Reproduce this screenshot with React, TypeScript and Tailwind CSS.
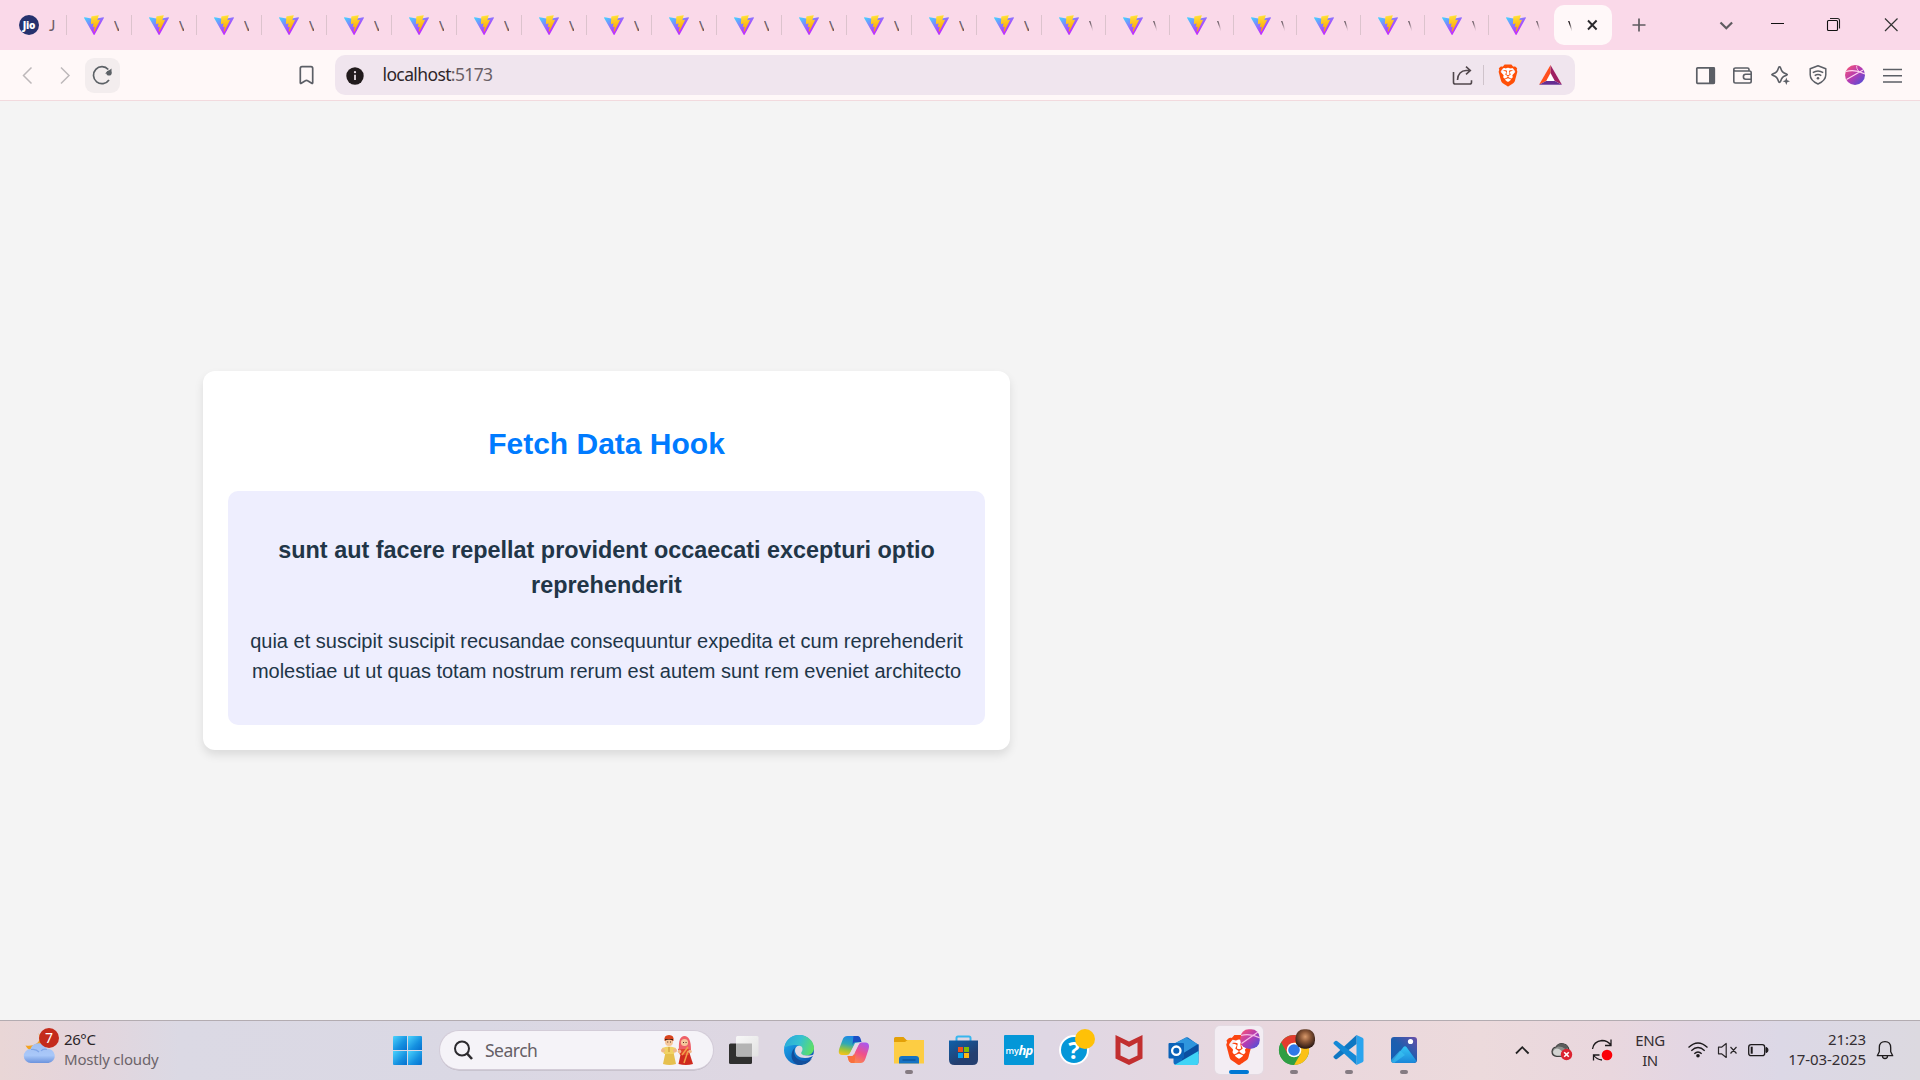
import React from "react";
import { SiBrave } from "react-icons/si";

const UI = "font-['Noto_Sans','Open_Sans',sans-serif]";

/** Icon whose drawing coordinates are given in window space. */
function Ico({
  box,
  className = "",
  children,
}: {
  box: [number, number, number, number];
  className?: string;
  children: React.ReactNode;
}) {
  return (
    <svg
      viewBox={box.join(" ")}
      width={box[2]}
      height={box[3]}
      fill="none"
      className={"block shrink-0 " + className}
    >
      {children}
    </svg>
  );
}

function Defs() {
  return (
    <svg width="0" height="0" className="absolute">
      <defs>
        <linearGradient id="viteA" x1="-.828%" x2="57.636%" y1="7.652%" y2="78.411%">
          <stop offset="0%" stopColor="#41D1FF" />
          <stop offset="100%" stopColor="#BD34FE" />
        </linearGradient>
        <linearGradient id="viteB" x1="43.376%" x2="50.316%" y1="2.242%" y2="89.03%">
          <stop offset="0%" stopColor="#FFEA83" />
          <stop offset="8.333%" stopColor="#FFDD35" />
          <stop offset="100%" stopColor="#FFA800" />
        </linearGradient>
        <linearGradient id="ball" x1="0" y1="0" x2="1" y2="1">
          <stop offset="0.1" stopColor="#f0507c" />
          <stop offset="0.5" stopColor="#b33bb4" />
          <stop offset="1" stopColor="#3f52dd" />
        </linearGradient>
        <linearGradient id="win" x1="0" y1="0" x2="1" y2="1">
          <stop offset="0" stopColor="#4bd3fd" />
          <stop offset="0.6" stopColor="#1590e0" />
          <stop offset="1" stopColor="#0670cf" />
        </linearGradient>
      </defs>
    </svg>
  );
}

function Vite() {
  return (
    <svg viewBox="0 0 256 257" width="20" height="20" className="block shrink-0">
      <path
        fill="url(#viteA)"
        d="M255.153 37.938L134.897 252.976c-2.483 4.44-8.862 4.466-11.382.048L.875 37.958c-2.746-4.814 1.371-10.646 6.827-9.67l120.385 21.517a6.537 6.537 0 0 0 2.322-.004l117.867-21.483c5.438-.991 9.574 4.796 6.877 9.62Z"
      />
      <path
        fill="url(#viteB)"
        d="M185.432.063L96.44 17.501a3.268 3.268 0 0 0-2.634 3.014l-5.474 92.456a3.268 3.268 0 0 0 3.997 3.378l24.777-5.718c2.318-.535 4.413 1.507 3.936 3.838l-7.361 36.047c-.495 2.426 1.782 4.5 4.151 3.78l15.304-4.649c2.372-.72 4.652 1.36 4.15 3.788l-11.698 56.621c-.732 3.542 3.979 5.473 5.943 2.437l1.313-2.028l72.516-144.72c1.215-2.423-.88-5.186-3.54-4.672l-25.505 4.922c-2.396.462-4.435-1.77-3.759-4.114l16.646-57.705c.677-2.35-1.37-4.583-3.769-4.113Z"
      />
    </svg>
  );
}

const TAB_WIDTHS = [...Array(15).fill(65), 64, 64, 64, 63, 64, 64, 64, 65];

function TabStrip() {
  return (
    <div className={"flex h-[50px] items-center bg-[#fad9e9] pl-[2px] text-[15px] text-[#6b5d65] " + UI}>
      <div className="flex h-[20px] w-[65px] shrink-0 items-center border-r border-[#dcc3cd] pl-[17px]">
        <div className="flex h-5 w-5 items-center justify-center rounded-full bg-[#25326e] font-['Open_Sans',sans-serif] text-[10px] leading-none font-extrabold tracking-[-0.2px] text-white">
          Jio
        </div>
        <span className="ml-[10px] font-['Lato','Open_Sans',sans-serif] text-[15px] leading-5">J</span>
      </div>
      {TAB_WIDTHS.map((w, i) => (
        <div
          key={i}
          style={{ width: w }}
          className={
            "flex h-[20px] shrink-0 items-center border-r pl-[17px] " +
            (i === TAB_WIDTHS.length - 1 ? "border-transparent" : "border-[#dcc3cd]")
          }
        >
          <Vite />
          <span
            className={
              "ml-[10px] overflow-hidden text-[15px] leading-5 " +
              (i < 15 ? "w-[5px]" : "w-[4px] [mask-image:linear-gradient(to_right,black_30%,transparent)]")
            }
          >
            V
          </span>
        </div>
      ))}
      <div className="flex h-10 w-[58px] shrink-0 items-center rounded-[10px] bg-[#fff8f9] pl-[14px] text-[#2b2326]">
        <span className="w-[4px] overflow-hidden leading-5 [mask-image:linear-gradient(to_right,black_40%,transparent)]">
          V
        </span>
        <Ico box={[1585, 15, 20, 20]} className="ml-[13px]">
          <path d="M1588 20.500l8.600 9M1596.600 20.500l-8.600 9" stroke="#2b2a2d" strokeWidth="1.900" />
        </Ico>
      </div>
      <Ico box={[1629, 15, 20, 20]} className="ml-[17px]">
        <path d="M1639 18.500v13M1632.500 25h13" stroke="#5f5b60" strokeWidth="1.700" />
      </Ico>
      <Ico box={[1716, 15, 20, 20]} className="ml-[67px]">
        <path d="M1720.500 22.500l5.800 5.800l5.800-5.800" stroke="#5f5b60" strokeWidth="2.200" />
      </Ico>
      <Ico box={[1767, 15, 20, 20]} className="ml-[31px]">
        <path d="M1771 23.500h13" stroke="#111" strokeWidth="1" />
      </Ico>
      <Ico box={[1823, 15, 20, 20]} className="ml-[36px]">
        <rect x="1827.500" y="20.500" width="10" height="10" rx="1" stroke="#111" strokeWidth="1.100" />
        <path d="M1830 18.500h7.500q2 0 2 2v8" stroke="#222" strokeWidth="1.100" />
      </Ico>
      <Ico box={[1881, 15, 20, 20]} className="ml-[38px]">
        <path d="M1885 18.500l12.500 12.500M1897.500 18.500l-12.500 12.500" stroke="#333" strokeWidth="1.200" />
      </Ico>
    </div>
  );
}

function Toolbar() {
  return (
    <div className="flex h-[51px] items-center border-b border-[#f2dade] bg-[#fff8f8] pl-[13px]">
      <Ico box={[13, 60, 30, 30]}>
        <path d="M31.500 67.500l-8 8l8 8" stroke="#bdb8ba" strokeWidth="1.500" />
      </Ico>
      <Ico box={[50, 60, 30, 30]} className="ml-[7px]">
        <path d="M61 67.500l8 8l-8 8" stroke="#bdb8ba" strokeWidth="1.500" />
      </Ico>
      <div className="ml-[5px] flex h-[35px] w-[35px] items-center justify-center rounded-[9px] bg-[#f3edee]">
        <Ico box={[90, 60, 25, 30]}>
          <path d="M108.300 69.500A8.500 8.500 0 1 0 109 80" stroke="#5c6166" strokeWidth="1.700" />
          <circle cx="109" cy="73" r="2.600" fill="#5c6166" />
          <path d="M105 73.500h6.500v-5z" fill="#5c6166" />
        </Ico>
      </div>
      <Ico box={[295, 60, 24, 30]} className="ml-[175px]">
        <path
          d="M302 66.700h9a1.700 1.700 0 0 1 1.700 1.700v14.400q0 1-1 .500l-4-2.500q-1.200-.8-2.400 0l-4 2.500q-1 .5-1-.5V68.400a1.700 1.700 0 0 1 1.700-1.700z"
          stroke="#5c5f66"
          strokeWidth="1.700"
        />
      </Ico>
      <div className="ml-[16px] flex h-10 w-[1240px] shrink-0 items-center rounded-[10px] bg-[#f0e5ee]">
        <Ico box={[345, 60, 20, 30]} className="ml-[10px]">
          <circle cx="355" cy="76" r="8.700" fill="#221b1d" />
          <path d="M355 74.700v5.300" stroke="#f0e5ee" strokeWidth="1.700" />
          <circle cx="355" cy="72.200" r="1.100" fill="#f0e5ee" />
        </Ico>
        <span className={"mb-[2px] ml-[17.500px] text-[17.500px] leading-6 tracking-[-0.62px] text-[#2e2529] " + UI}>
          localhost<span className="text-[#6a6066]">:5173</span>
        </span>
        <div className="ml-auto flex items-center pr-[9px]">
          <Ico box={[1450, 60, 25, 30]}>
            <path
              d="M1453.500 72v10.200q0 1.800 1.800 1.800h14.400q1.800 0 1.800-1.800v-2M1457.500 80c0-6 4-9.500 8.500-9.500h4M1466 66.700l4.300 3.800l-4.300 3.800"
              stroke="#51474c"
              strokeWidth="1.600"
            />
          </Ico>
          <div className="ml-[8px] h-5 w-px bg-[#cfc3cb]" />
          <div className="relative ml-[13px] flex h-6 w-[22px] items-center justify-center">
            <div className="absolute inset-x-[5px] inset-y-[4px] rounded-full bg-white" />
            <SiBrave className="relative h-[23px] w-[23px] text-[#ff4f07]" />
          </div>
          <Ico box={[1537, 60, 29, 30]} className="ml-[18px]">
            <path d="M1550.500 65L1539 84.800h23z" fill="#fff" />
            <path d="M1550.500 65L1539 84.800l7.200-3.800l4.300-8z" fill="#ff4f1f" />
            <path d="M1550.500 65L1562 84.800l-7.200-3.800l-4.300-8z" fill="#9e1f63" />
            <path d="M1539 84.800h23l-7.200-3.800h-8.600z" fill="#662d91" />
          </Ico>
        </div>
      </div>
      <Ico box={[1691, 60, 30, 30]} className="ml-[116px]">
        <rect x="1696.800" y="67.800" width="17.500" height="15.500" rx=".8" stroke="#5c5f66" strokeWidth="1.700" />
        <path d="M1709 67h5.500v17h-5.500z" fill="#5c5f66" />
      </Ico>
      <Ico box={[1728, 60, 30, 30]} className="ml-[7px]">
        <path
          d="M1733.800 68.500v12.800q0 1.700 1.700 1.700h14q1.700 0 1.700-1.700v-8.600q0-1.700-1.700-1.700h-14q-1.700 0-1.700-1.500t1.700-1.500h12q1.500 0 1.500 1.500v1.500M1751.200 74.300h-5.500q-2.300 0-2.300 2.500t2.300 2.500h5.500"
          stroke="#5c5f66"
          strokeWidth="1.600"
        />
      </Ico>
      <Ico box={[1766, 60, 30, 30]} className="ml-[8px]">
        <path
          d="M1779.500 66.800q.7 0 1 .900c1.300 4 2.300 5 6 6.200q1.600.7 0 1.400c-3.700 1.200-4.700 2.200-6 6.200q-.9 1.700-1.900 0c-1.300-4-2.300-5-6-6.200q-1.600-.7 0-1.400c3.700-1.200 4.700-2.200 6-6.200q.3-.9.9-.9z"
          stroke="#5c5f66"
          strokeWidth="1.600"
        />
        <circle cx="1786.500" cy="81" r="4" fill="#fff8f8" />
        <path d="M1786.300 77.500l1 2.700l2.700 1l-2.700 1l-1 2.700l-1-2.700l-2.700-1l2.700-1z" fill="#5c5f66" />
      </Ico>
      <Ico box={[1804, 60, 28, 30]} className="ml-[8px]">
        <path
          d="M1818 65.800l7.800 3v6q0 5.800-7.800 9.200q-7.800-3.400-7.800-9.200v-6z"
          stroke="#5c5f66"
          strokeWidth="1.500"
          strokeLinejoin="round"
        />
        <path
          d="M1812.800 72.700q5.200-3.400 10.400 0M1814.700 75.600q3.300-2.200 6.600 0"
          stroke="#5c5f66"
          strokeWidth="1.500"
        />
        <circle cx="1818" cy="78.300" r="1.300" fill="#5c5f66" />
      </Ico>
      <Ico box={[1843, 60, 24, 30]} className="ml-[11px]">
        <circle cx="1855" cy="75" r="10" fill="url(#ball)" />
        <path d="M1846.500 79.500l16.500-9.500M1846 71.500q9-2.500 19 2.500" stroke="#ffd5ef" strokeWidth="1.100" />
        <path d="M1856.500 66q0 3 2 5" stroke="#ffd5ef" strokeWidth=".8" />
      </Ico>
      <Ico box={[1880, 60, 25, 30]} className="ml-[13px]">
        <path d="M1883 69.500h19M1883 75.700h19M1883 82h19" stroke="#5c5f66" strokeWidth="1.500" />
      </Ico>
    </div>
  );
}

function Page() {
  return (
    <div className="flex h-[919px] items-center bg-[#f4f4f4] pl-[203px] font-['Liberation_Sans',Arial,sans-serif]">
      <div className="h-[379px] w-[807px] rounded-[12px] bg-white p-[25px] text-center shadow-[0_5px_10px_rgba(0,0,0,0.1)]">
        <h2 className="mt-[25px] h-[45px] text-[30px] leading-[45px] font-bold text-[#007bff]">Fetch Data Hook</h2>
        <div className="mt-[25px] h-[234px] rounded-[10px] bg-[#eeeefe] pt-[42px] text-[#213547]">
          <h3 className="text-[23.400px] leading-[35px] font-bold whitespace-nowrap">
            sunt aut facere repellat provident occaecati excepturi optio
            <br />
            reprehenderit
          </h3>
          <p className="mt-[23px] text-[20px] leading-[30px] whitespace-nowrap">
            quia et suscipit suscipit recusandae consequuntur expedita et cum reprehenderit
            <br />
            molestiae ut ut quas totam nostrum rerum est autem sunt rem eveniet architecto
          </p>
        </div>
      </div>
    </div>
  );
}

function AppSlot({
  running,
  active,
  children,
}: {
  running?: boolean;
  active?: boolean;
  children: React.ReactNode;
}) {
  return (
    <div className="flex h-[59px] w-[55px] shrink-0 justify-center pt-[5px]">
      <div
        className={
          "relative flex h-[48px] w-[48px] items-center justify-center rounded-[5px] " +
          (active ? "bg-[#f3edf3] shadow-[0_0_0_1px_#e4dae2]" : "")
        }
      >
        {children}
        {running && <div className="absolute bottom-0 left-5 h-1 w-2 rounded-full bg-[#857b82]" />}
        {active && <div className="absolute bottom-0 left-[14px] h-1 w-5 rounded-full bg-[#0078d4]" />}
      </div>
    </div>
  );
}

function AppIcon({ children }: { children: React.ReactNode }) {
  return (
    <svg viewBox="0.5 0 48 48" width="48" height="48" fill="none" className="block">
      {children}
    </svg>
  );
}

function Edge() {
  return (
    <AppIcon>
      <defs>
        <linearGradient id="eg1" x1="10" y1="12" x2="38" y2="24" gradientUnits="userSpaceOnUse">
          <stop stopColor="#2aa8dc" />
          <stop offset=".5" stopColor="#35c1d0" />
          <stop offset="1" stopColor="#5fe063" />
        </linearGradient>
        <linearGradient id="eg2" x1="9" y1="20" x2="28" y2="39" gradientUnits="userSpaceOnUse">
          <stop stopColor="#1aa0e6" />
          <stop offset="1" stopColor="#0d5cb8" />
        </linearGradient>
      </defs>
      <circle cx="24.500" cy="24" r="15" fill="url(#eg2)" />
      <path d="M9.800 22C11 14 17 9 24.500 9C33 9 39.500 15 39.500 22c0 5-4 7.500-8 7.500c-4 0-6-1.500-5-3c3-4-1-7.500-5.500-7.500c-4 0-9 1-11.200 3z" fill="url(#eg1)" />
      <path d="M21 21c-4 5 0 14 9 14c3 0 5.500-1 7.500-2.500C34.500 37 30 39 25 39c-8-1-11-12-4-18z" fill="#124f9c" />
      <path d="M27 20.500c-3-2-6.500 0-6.500 4c0 4 4 7.500 10 7.500c4.500 0 8-1.500 9.500-4c-4 2.500-14.500 2-13.200-1.500c1.500-2 1.700-4.500.2-6z" fill="#dfd8e4" />
    </AppIcon>
  );
}

function Copilot() {
  return (
    <AppIcon>
      <defs>
        <linearGradient id="cp1" x1="20" y1="9" x2="16" y2="29" gradientUnits="userSpaceOnUse">
          <stop stopColor="#1b84ee" />
          <stop offset=".45" stopColor="#2fa9b5" />
          <stop offset=".75" stopColor="#9bc43a" />
          <stop offset="1" stopColor="#f4c31c" />
        </linearGradient>
        <linearGradient id="cp2" x1="36" y1="17" x2="26" y2="37" gradientUnits="userSpaceOnUse">
          <stop stopColor="#a957ef" />
          <stop offset=".5" stopColor="#f0508a" />
          <stop offset="1" stopColor="#fb8a4c" />
        </linearGradient>
      </defs>
      <path d="M18 10h9c3 0 3.500 2 4.500 6l-6 1l-5 10q-1 2-3 2h-5c-4 0-3.500-4-2.500-7l3-8q1.200-4 5-4z" fill="url(#cp1)" />
      <path d="M24 10h3.500c3 0 3.500 2 4.500 6h-6q-2 0-3 3z" fill="#1a4fc4" />
      <path d="M31 37h-8c-3 0-4-2-5-7h5l6-11q1-2.500 3-2.500h4c4 0 4 4 3 7l-3 9q-1.500 4.500-5 4.500z" fill="url(#cp2)" />
      <path d="M23 37c-3 0-4-2-5-7h5q2 0 3-2l-1 9z" fill="#f9703e" />
      <path d="M26 17.500h3.500l-5 11H20z" fill="#e6d9e6" />
    </AppIcon>
  );
}

function Taskbar() {
  return (
    <div
      className={
        "flex h-[60px] border-t border-[#b3acb1] bg-[linear-gradient(90deg,#e9d6d6_0px,#e4d5dc_80px,#dbd9e4_180px,#dad8e4_480px,#ded7e2_760px,#dfd7e4_1050px,#ead7dd_1300px,#ecdadc_1480px,#e9d7de_1610px,#e3d6e3_1690px,#dcd8e6_1780px,#dcd9e0_1920px)] pl-[23px] text-[15px] " +
        UI
      }
    >
      <div className="relative mt-[7px] h-[44px] w-[36px] shrink-0">
        <Ico box={[23, 1028, 36, 38]}>
          <defs>
            <linearGradient id="cl" x1="0" y1="1044" x2="0" y2="1063" gradientUnits="userSpaceOnUse">
              <stop stopColor="#a3c0f2" />
              <stop offset=".6" stopColor="#a9c8f9" />
              <stop offset="1" stopColor="#6b93dd" />
            </linearGradient>
          </defs>
          <path d="M38.500 1033q2.500 8-2 10.500q-4 3-11 2q2.500 5 8.500 5.500q9 0 10-8z" fill="#f3a322" />
          <path d="M31 1063a6.500 6.500 0 0 1-.5-14a8.600 8.600 0 0 1 16.200-.3a7.200 7.200 0 0 1 1.800 14.300z" fill="url(#cl)" />
          <path d="M31 1049.500q5-1 8 2.500M47 1049.500q-4-1-6 1.500" stroke="#7fa6e8" strokeWidth="1.200" />
        </Ico>
        <div className="absolute top-0 left-[16px] flex h-5 w-5 items-center justify-center rounded-full bg-[#c42b1c] text-[14px] leading-none text-white">
          7
        </div>
      </div>
      <div className="mt-[8px] ml-[5px] w-[324px] shrink-0 leading-5 tracking-[-0.2px]">
        <div className="tracking-[-0.4px] text-[#2a2428]">26°C</div>
        <div className="text-[#6c646a]">Mostly cloudy</div>
      </div>
      <Ico box={[388, 1021, 38, 59]} className="ml-0">
        <g fill="url(#win)">
          <path d="M393 1037q0-1 1-1h13v14h-14z" />
          <path d="M408 1036h13q1 0 1 1v13h-14z" />
          <path d="M393 1051h14v14h-13q-1 0-1-1z" />
          <path d="M408 1051h14v13q0 1-1 1h-13z" />
        </g>
      </Ico>
      <div className="mt-[10px] ml-[14px] flex h-[38px] w-[273px] shrink-0 items-center rounded-full bg-[#f5f3f8] shadow-[0_0_0_1px_#d3ccd8,0_1.500px_0_0_#b5afba]">
        <Ico box={[452, 1038, 22, 24]} className="ml-[12px]">
          <circle cx="462" cy="1048.500" r="7" stroke="#2c2a2e" strokeWidth="2" />
          <path d="M467 1053.500l5 5.500" stroke="#2c2a2e" strokeWidth="2.600" />
        </Ico>
        <span className="ml-[11px] text-[17.500px] leading-6 tracking-[-0.5px] text-[#655f66]">Search</span>
        <Ico box={[659, 1033, 38, 34]} className="mr-[16px] ml-auto">
          <path d="M663 1064l3-14h7l3 14q-6.500 2-13 0z" fill="#e6c04e" />
          <path d="M662 1048q7-3 14 0l-2 6h-10z" fill="#f0d265" />
          <circle cx="663" cy="1050.500" r="2" fill="#f0b789" />
          <circle cx="675" cy="1050.500" r="2" fill="#f0b789" />
          <circle cx="669" cy="1042" r="4" fill="#f6c79b" />
          <path d="M664.500 1041q-1-6 4.500-6t4.500 6q-4.500-3-9 0z" fill="#d8431c" />
          <path d="M665 1040.500q4-2 8 0v-1.500h-8z" fill="#3a2018" />
          <path d="M669 1047v5" stroke="#c88f2c" strokeWidth="1" />
          <path d="M678.500 1064l3-14h7l4.500 14q-7 2-14.500 0z" fill="#cf2a1e" />
          <path d="M678 1049q6-4 13 0l-2 6h-9z" fill="#e0452c" />
          <path d="M679 1050q-1-14 5.500-14t6.500 14l-3-1h-6z" fill="#ee6068" />
          <circle cx="684.500" cy="1042.500" r="3.600" fill="#f6c79b" />
          <path d="M688 1047l-6 8M684 1063l4-12" stroke="#f2a04a" strokeWidth="1.500" />
          <circle cx="679.500" cy="1051.500" r="1.800" fill="#f0b789" />
          <circle cx="690" cy="1051.500" r="1.800" fill="#f0b789" />
          <path d="M667.300 1042h.9M670 1042h.9M683 1042.500h.9M685.600 1042.500h.9" stroke="#3a2018" strokeWidth="1" />
        </Ico>
      </div>
      <Ico box={[727, 1021, 34, 59]} className="ml-[14px]">
        <defs>
          <linearGradient id="tv" x1="0" y1="0" x2="1" y2="1">
            <stop stopColor="#f8f8f8" />
            <stop offset="1" stopColor="#e2e2e2" />
          </linearGradient>
        </defs>
        <rect x="729" y="1043.500" width="23" height="20.500" rx="1.500" fill="#30302f" />
        <rect x="736" y="1036" width="22.500" height="20.500" rx="1.500" fill="url(#tv)" />
        <path d="M736 1043.500h16v13h-14.500q-1.500 0-1.500-1.500z" fill="#b4b4b4" />
      </Ico>

      <div className="ml-[10.500px] flex">
        <AppSlot><Edge /></AppSlot>
        <AppSlot><Copilot /></AppSlot>
        <AppSlot running>
          <AppIcon>
            <path d="M9.500 12.500q0-1.500 1.500-1.500h8l3 3h17.500v8h-30z" fill="#e3a008" />
            <path d="M9.500 16h11l2.500-2h16.500v23.500h-30z" fill="#fdcd43" />
            <path d="M14.500 37.500v-4.500q0-3 3-3h14q3 0 3 3v4.500z" fill="#1673c4" />
            <path d="M18 34h13" stroke="#0b4f94" strokeWidth="1.200" />
          </AppIcon>
        </AppSlot>
        <AppSlot>
          <AppIcon>
            <defs>
              <linearGradient id="st" x1="0" y1="14" x2="14" y2="39" gradientUnits="userSpaceOnUse">
                <stop stopColor="#0a68b8" />
                <stop offset="1" stopColor="#243f70" />
              </linearGradient>
            </defs>
            <g transform="translate(-.5 0)">
              <path d="M17.500 16v-4q0-1.500 1.500-1.500h11q1.500 0 1.500 1.500v4" stroke="#38b6ee" strokeWidth="2" />
              <path d="M10 14.500h29v19q0 5.500-5.500 5.500h-18q-5.500 0-5.500-5.500z" fill="url(#st)" />
              <path d="M19 21h5v5h-5z" fill="#f1511b" />
              <path d="M25 21h5v5h-5z" fill="#80bb03" />
              <path d="M19 27h5v5h-5z" fill="#03a5ef" />
              <path d="M25 27h5v5h-5z" fill="#fdb812" />
            </g>
          </AppIcon>
        </AppSlot>
        <AppSlot>
          <div className="flex h-[30px] w-[30px] items-center justify-center rounded-[1px] bg-[#0497d8] font-['Open_Sans',sans-serif] leading-none text-white">
            <span className="text-[9px] font-semibold tracking-[-0.3px]">my</span>
            <span className="text-[13px] font-bold tracking-[-0.8px] italic">hp</span>
          </div>
        </AppSlot>
        <AppSlot>
          <div className="relative h-[30px] w-[30px]">
            <div className="flex h-[30px] w-[30px] items-center justify-center rounded-full border-2 border-white bg-[#0497d8] text-[24px] leading-none font-bold text-white">
              ?
            </div>
            <div className="absolute -top-[6px] left-[16px] h-5 w-5 rounded-full bg-[#ffc107]" />
          </div>
        </AppSlot>
        <AppSlot>
          <AppIcon>
            <path
              d="M11 9l13.500 6.500L38 9v23.500L24.500 39L11 32.500zM16 16.500v13l8.500 4l8.500-4v-13l-8.500 4.500z"
              fill="#c22f30"
              fillRule="evenodd"
            />
          </AppIcon>
        </AppSlot>
        <AppSlot>
          <AppIcon>
            <path d="M14 18L26.500 11.500q1-.5 2 0L39 19v17q0 3-3 3H17q-3 0-3-3z" fill="#0f6cc0" />
            <path d="M14 18L26.500 11.500L38 18L21 30z" fill="#2f96dd" />
            <path d="M24 27L39 18v10L22 36z" fill="#0b4fa0" />
            <path d="M15 39l24-14v11q0 3-3 3z" fill="#3fd4f6" />
            <rect x="9" y="17" width="15.500" height="15.500" rx="1" fill="#0a62b8" />
            <circle cx="16.800" cy="24.700" r="4.200" stroke="#fff" strokeWidth="2.300" />
          </AppIcon>
        </AppSlot>
        <AppSlot active>
          <div className="absolute top-[14px] left-[18px] h-[20px] w-[13px] rounded-full bg-white" />
          <SiBrave className="relative h-[30px] w-[30px] text-[#fb4410]" />
          <Ico box={[1845, 65, 20, 20]} className="absolute top-[3px] left-[25px]">
            <rect x="1845.300" y="65.300" width="19.400" height="19.400" rx="8.500" fill="url(#ball)" />
            <path d="M1846.500 79.500l16.500-11.500M1846 71.500q9-2.500 19 2.500" stroke="#f6bde6" strokeWidth="1.200" />
          </Ico>
        </AppSlot>
        <AppSlot running>
          <AppIcon>
            <circle cx="24.500" cy="24" r="15" fill="#34a045" />
            <path d="M24.500 24L11.500 16.500A15 15 0 0 1 37.500 16.500z" fill="#e33b2e" />
            <path d="M24.500 16.500H37.500A15 15 0 0 1 24.500 39L31 28z" fill="#fbc116" />
            <path d="M11.500 16.500L18 28l6.500-4v-7.500z" fill="#e33b2e" />
            <path d="M11.500 16.500L18 27.800A7.500 7.500 0 0 0 27 31l-2.500 8A15 15 0 0 1 11.500 16.500z" fill="#2f9e44" />
            <circle cx="24.500" cy="24" r="7.300" fill="#fff" />
            <circle cx="24.500" cy="24" r="5.800" fill="#2f78e8" />
            <defs>
              <radialGradient id="face" cx=".5" cy=".38" r=".6">
                <stop stopColor="#d99a6c" />
                <stop offset=".45" stopColor="#8a5636" />
                <stop offset="1" stopColor="#2c1a16" />
              </radialGradient>
            </defs>
            <rect x="26" y="3.300" width="19.500" height="19.500" rx="8.500" fill="url(#face)" />
          </AppIcon>
        </AppSlot>
        <AppSlot running>
          <AppIcon>
            <path d="M32 9l6 2.700q1 .5 1 1.700v21.200q0 1.200-1 1.700L32 39z" fill="#2aa4ee" />
            <path d="M32 9v9L12.500 33q-1 .700-1.800 0l-1.400-1.300q-.8-.8 0-1.600z" fill="#0f77c2" />
            <path d="M32 39v-9L12.500 15q-1-.7-1.800 0l-1.400 1.300q-.8.800 0 1.600z" fill="#1489d6" />
          </AppIcon>
        </AppSlot>
        <AppSlot running>
          <AppIcon>
            <defs>
              <linearGradient id="ph" x1="11" y1="37" x2="37" y2="11" gradientUnits="userSpaceOnUse">
                <stop stopColor="#1260b8" />
                <stop offset=".5" stopColor="#1d5eae" />
                <stop offset="1" stopColor="#6a4fa8" />
              </linearGradient>
              <linearGradient id="ph2" x1="0" y1="20" x2="0" y2="37" gradientUnits="userSpaceOnUse">
                <stop stopColor="#35c7f5" />
                <stop offset="1" stopColor="#1b86d8" />
              </linearGradient>
            </defs>
            <g transform="translate(.5 0)">
              <rect x="11" y="11" width="26" height="26" rx="3" fill="url(#ph)" />
              <path d="M12 36L23.500 21q1.500-1.500 3 0L36.500 35q-1 2-3 2H14z" fill="url(#ph2)" />
              <path d="M11 34L20 24.500l5 4.500L14 37q-3 0-3-3z" fill="#3cc4f2" opacity=".6" />
              <circle cx="30.500" cy="15.500" r="2.600" fill="#fff" />
            </g>
          </AppIcon>
        </AppSlot>
      </div>

      <div className="ml-[77.500px] flex h-[59px] items-center">
        <Ico box={[1510, 1021, 26, 59]}>
          <path d="M1517 1053.500l6.300-6.300l6.300 6.300" stroke="#222" strokeWidth="1.800" />
        </Ico>
        <Ico box={[1550, 1021, 26, 59]} className="ml-[14px]">
          <path d="M1558 1056.500q-5-.500-5-5q.5-4 4-4.500q3-4.500 8-3q4 1 5 6v6z" fill="#8d8f8d" stroke="#3a3a3a" strokeWidth="1.200" />
          <path d="M1557 1047q3-4.500 8-3.200q3 1 4.500 4.200l-3 1q-5-3.500-9.500-2z" fill="#5a5c5b" />
          <path d="M1558 1055.500q-4-.5-4-4q2-4 6-2.500l9 6.500z" fill="#d3d3d1" />
          <circle cx="1567.500" cy="1054.500" r="5.700" fill="#dc2330" />
          <path d="M1565.200 1052.200l4.600 4.600M1569.800 1052.200l-4.600 4.600" stroke="#fff" strokeWidth="1.600" />
        </Ico>
        <Ico box={[1590, 1021, 26, 59]} className="ml-[14px]">
          <path d="M1593.500 1049q1-7.500 9.500-8.500q5.500 0 9 4.500M1612 1039.500v6h-6M1594.500 1060.500v-5.500h6M1594.500 1055q3 4.500 8.500 5" stroke="#1d1a1c" strokeWidth="1.300" />
          <circle cx="1608" cy="1055" r="5.300" fill="#fb0007" />
        </Ico>
        <div className="mb-[2px] ml-[15px] w-[40px] text-center leading-5 tracking-[-0.4px] text-[#342e32]">
          ENG
          <br />
          IN
        </div>
        <Ico box={[1685, 1021, 26, 59]} className="ml-[15px]">
          <path d="M1688.500 1047.500q9.500-9 19 0M1691.300 1050.800q6.700-6.500 13.400 0M1694.300 1053.800q3.700-3.600 7.400 0" stroke="#1d1a1c" strokeWidth="1.300" />
          <circle cx="1698" cy="1055.700" r="1.800" fill="#1d1a1c" />
        </Ico>
        <Ico box={[1715, 1021, 26, 59]} className="ml-[4px]">
          <path d="M1718.500 1047.200h3l4.700-3.700v14l-4.700-3.700h-3z M1730.500 1047l6 6.500M1736.500 1047l-6 6.500" stroke="#2a2629" strokeWidth="1.200" strokeLinejoin="round" />
        </Ico>
        <Ico box={[1745, 1021, 26, 59]} className="ml-[4px]">
          <rect x="1748.700" y="1044.700" width="16" height="11" rx="2.500" stroke="#1d1a1c" strokeWidth="1.300" />
          <path d="M1766 1047.500q2 0 2 2.500t-2 2.500z" fill="#1d1a1c" stroke="#1d1a1c" />
          <rect x="1750.700" y="1046.700" width="2" height="7" fill="#1d1a1c" />
        </Ico>
        <div className="mb-[4px] w-[95px] text-right leading-5 tracking-[-0.05px] whitespace-nowrap text-[#342e32]">
          21:23
          <br />
          17-03-2025
        </div>
        <Ico box={[1874, 1021, 22, 59]} className="ml-[8px]">
          <path d="M1885 1041.700q-5.700 0-5.700 6v4l-2 4h15.400l-2-4v-4q0-6-5.700-6z" stroke="#1d1a1c" strokeWidth="1.300" strokeLinejoin="round" />
          <path d="M1882.500 1056q0 2.500 2.500 2.500t2.500-2.500" stroke="#1d1a1c" strokeWidth="1.300" />
        </Ico>
      </div>
    </div>
  );
}

export default function App() {
  return (
    <div className="h-[1080px] w-[1920px] overflow-hidden">
      <Defs />
      <TabStrip />
      <Toolbar />
      <Page />
      <Taskbar />
    </div>
  );
}
